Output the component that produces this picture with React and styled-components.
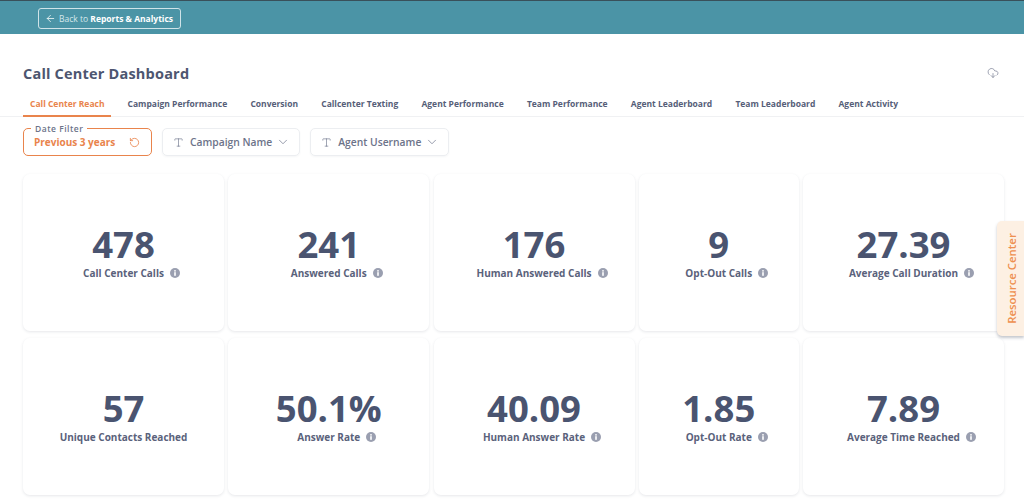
import styled, { createGlobalStyle } from 'styled-components';
import { ArrowLeft, ChevronDown, RotateCcw, CloudDownload, Type } from 'lucide-react';

const GlobalStyle = createGlobalStyle`
  html, body {
    margin: 0;
    padding: 0;
    background: #fff;
    font-family: "Open Sans", "Noto Sans", sans-serif;
  }
  * { box-sizing: border-box; }
`;

const Page = styled.div`
  position: relative;
  width: 1024px;
  height: 504px;
  overflow: hidden;
  background: #fff;
`;

const TopBar = styled.div`
  height: 34px;
  padding: 6px 38px 0;
  background: #4b94a6;
  border-top: 1px solid #39505a;
`;

const BackButton = styled.div`
  display: inline-flex;
  align-items: center;
  gap: 3px;
  width: 143px;
  height: 21px;
  padding-left: 6px;
  border: 1px solid #cfe3e8;
  border-radius: 3px;
  color: #d5e7eb;
  font-size: 8.5px;
  font-weight: 500;
  white-space: nowrap;
  svg { color: #eef6f7; }
  b { color: #fff; font-weight: 700; }
`;

const TitleRow = styled.div`
  display: flex;
  align-items: center;
  justify-content: space-between;
  height: 24px;
  margin-top: 27px;
  padding: 0 25px 0 23px;
  color: #80869a;
`;

const Title = styled.h1`
  margin: 0;
  color: #4d5670;
  font-size: 14.5px;
  font-weight: 700;
  letter-spacing: 0.2px;
`;

const Tabs = styled.div`
  display: flex;
  height: 27px;
  margin-top: 5px;
  padding-left: 23px;
  border-bottom: 1px solid #f0f1f3;
`;

const Tab = styled.div`
  height: 27px;
  margin-right: ${(p) => p.$gap}px;
  padding: 8px ${(p) => (p.$active ? 7 : 0)}px 0;
  border-bottom: ${(p) => (p.$active ? '2px solid #e9844c' : 'none')};
  color: ${(p) => (p.$active ? '#e9844c' : '#565e78')};
  font-size: 8.5px;
  font-weight: 700;
  line-height: 12px;
  white-space: nowrap;
`;

const Filters = styled.div`
  display: flex;
  gap: 10px;
  margin-top: 11px;
  padding-left: 23px;
`;

const DateFilter = styled.div`
  position: relative;
  display: flex;
  align-items: center;
  justify-content: space-between;
  width: 129px;
  height: 28px;
  padding: 0 11px 0 10px;
  border: 1.5px solid #e9844c;
  border-radius: 5px;
  color: #e9844c;
  font-size: 10px;
  font-weight: 700;
`;

const FilterLegend = styled.span`
  position: absolute;
  top: -6px;
  left: 7px;
  padding: 0 4px;
  background: #fff;
  color: #6c7389;
  font-size: 8.5px;
  font-weight: 600;
  line-height: 11px;
  letter-spacing: 0.5px;
`;

const FilterChip = styled.div`
  display: flex;
  align-items: center;
  height: 28px;
  padding: 0 9px 0 10px;
  border: 1px solid #eceef1;
  border-radius: 5px;
  box-shadow: 0 1px 2px rgba(60, 70, 90, 0.05);
  color: #6c7389;
  font-size: 10.3px;
  font-weight: 600;
  white-space: nowrap;
  span { margin: 0 4px 0 6px; }
`;

const Grid = styled.div`
  display: grid;
  grid-template-columns: 201px 201px 201px 160px 201px;
  grid-auto-rows: 157px;
  column-gap: 4.25px;
  row-gap: 7px;
  margin-top: 18px;
  padding-left: 23px;
`;

const Card = styled.div`
  display: flex;
  flex-direction: column;
  align-items: center;
  justify-content: center;
  padding-bottom: 1px;
  border-radius: 7px;
  background: #fff;
  box-shadow: 0 1px 3px rgba(60, 70, 90, 0.13);
`;

const Value = styled.div`
  color: #4a5470;
  font-size: 36.5px;
  font-weight: 700;
  line-height: 40px;
`;

const Label = styled.div`
  position: relative;
  margin-top: 2px;
  color: #5a627b;
  font-size: 10px;
  font-weight: 700;
  line-height: 14px;
  white-space: nowrap;
`;

const InfoMark = styled.svg`
  position: absolute;
  top: 2px;
  right: -16px;
  width: 10px;
  height: 10px;
`;

const ResourceTab = styled.div`
  position: absolute;
  top: 221px;
  right: 0;
  display: flex;
  align-items: center;
  justify-content: center;
  width: 27px;
  height: 115px;
  padding-left: 2px;
  border-radius: 5px 0 0 5px;
  background: #fdf0e3;
  box-shadow: 0 2px 3px rgba(60, 70, 90, 0.3);
  color: #ee8f4f;
  font-size: 11.4px;
  font-weight: 600;
  white-space: nowrap;
  span { transform: rotate(-90deg); }
`;

const InfoIcon = () => (
  <InfoMark viewBox="0 0 10 10">
    <circle cx="5" cy="5" r="5" fill="#9a9fb0" />
    <rect x="4.2" y="4.2" width="1.6" height="3.6" fill="#fff" />
    <circle cx="5" cy="2.8" r="0.9" fill="#fff" />
  </InfoMark>
);

const tabs = [
  'Campaign Performance',
  'Conversion',
  'Callcenter Texting',
  'Agent Performance',
  'Team Performance',
  'Agent Leaderboard',
  'Team Leaderboard',
  'Agent Activity',
];

const stats = [
  ['478', 'Call Center Calls', true],
  ['241', 'Answered Calls', true],
  ['176', 'Human Answered Calls', true],
  ['9', 'Opt-Out Calls', true],
  ['27.39', 'Average Call Duration', true],
  ['57', 'Unique Contacts Reached', false],
  ['50.1%', 'Answer Rate', true],
  ['40.09', 'Human Answer Rate', true],
  ['1.85', 'Opt-Out Rate', true],
  ['7.89', 'Average Time Reached', true],
];

export default function App() {
  return (
    <Page>
      <GlobalStyle />
      <TopBar>
        <BackButton>
          <ArrowLeft size={11} strokeWidth={1.8} />
          <span>Back to <b>Reports &amp; Analytics</b></span>
        </BackButton>
      </TopBar>
      <TitleRow>
        <Title>Call Center Dashboard</Title>
        <CloudDownload size={12} strokeWidth={1.5} />
      </TitleRow>
      <Tabs>
        <Tab $active $gap={16}>Call Center Reach</Tab>
        {tabs.map((name) => (
          <Tab key={name} $gap={23.2}>{name}</Tab>
        ))}
      </Tabs>
      <Filters>
        <DateFilter>
          <FilterLegend>Date Filter</FilterLegend>
          Previous 3 years
          <RotateCcw size={11} strokeWidth={1.8} />
        </DateFilter>
        <FilterChip>
          <Type size={11} strokeWidth={1.4} />
          <span>Campaign Name</span>
          <ChevronDown size={14} strokeWidth={1.2} />
        </FilterChip>
        <FilterChip>
          <Type size={11} strokeWidth={1.4} />
          <span>Agent Username</span>
          <ChevronDown size={14} strokeWidth={1.2} />
        </FilterChip>
      </Filters>
      <Grid>
        {stats.map(([value, label, info]) => (
          <Card key={label}>
            <Value>{value}</Value>
            <Label>
              {label}
              {info && <InfoIcon />}
            </Label>
          </Card>
        ))}
      </Grid>
      <ResourceTab><span>Resource Center</span></ResourceTab>
    </Page>
  );
}
